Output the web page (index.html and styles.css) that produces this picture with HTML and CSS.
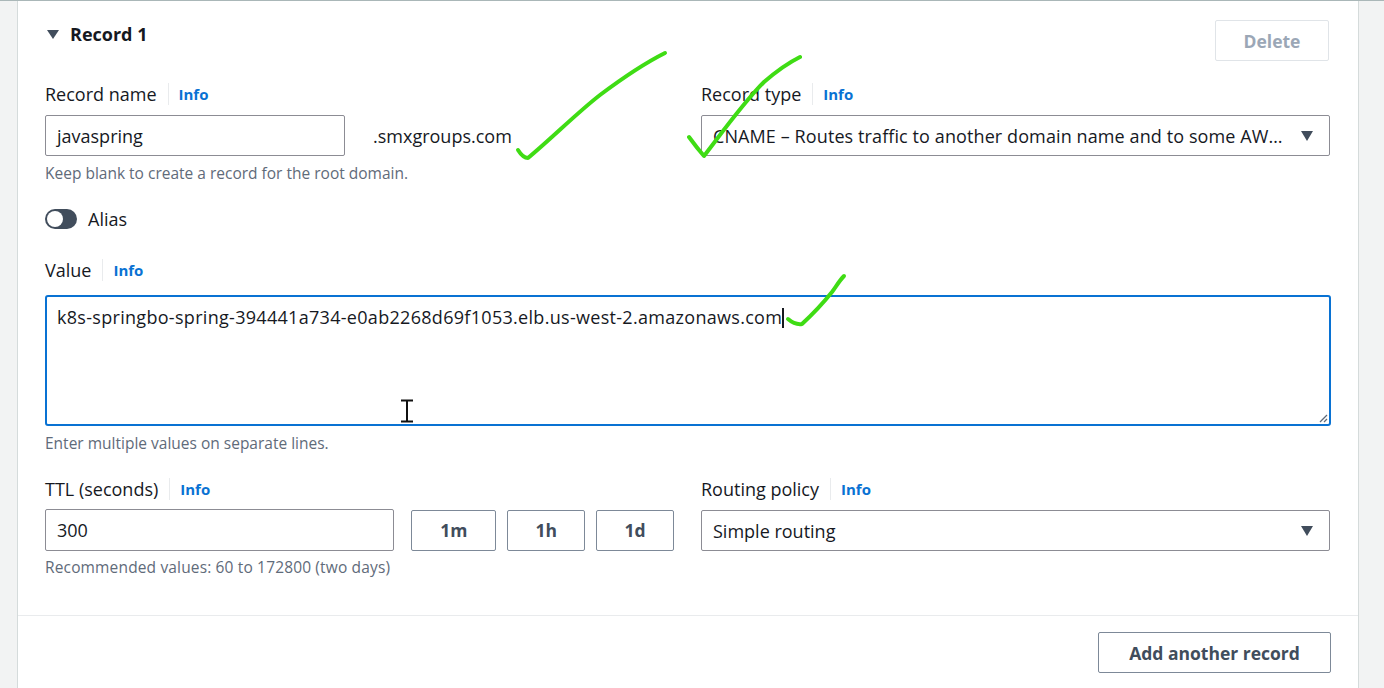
FILE: index.html
```html
<!DOCTYPE html>
<html lang="en">
<head>
<meta charset="utf-8">
<title>Record 1</title>
<link rel="stylesheet" href="styles.css">
</head>
<body>
<div class="page">
  <div class="strip-left"></div>
  <main class="panel">
    <div class="record">
      <div class="record-header">
        <div class="record-title"><span class="caret-down"></span>Record 1</div>
        <button class="btn btn-disabled">Delete</button>
      </div>

      <div class="grid-two">
        <div class="field">
          <div class="label-row"><span class="label">Record name</span><span class="sep"></span><a class="info">Info</a></div>
          <div class="name-row">
            <div class="input input-name">javaspring</div>
            <span class="suffix">.smxgroups.com</span>
          </div>
          <div class="hint">Keep blank to create a record for the root domain.</div>
        </div>
        <div class="field">
          <div class="label-row"><span class="label">Record type</span><span class="sep"></span><a class="info">Info</a></div>
          <div class="select">
            <span class="select-text cname">CNAME – Routes traffic to another domain name and to some AW…</span>
            <span class="tri"></span>
          </div>
        </div>
      </div>

      <div class="toggle-row">
        <span class="toggle"><span class="knob"></span></span>
        <span class="toggle-label">Alias</span>
      </div>

      <div class="field value-field">
        <div class="label-row"><span class="label">Value</span><span class="sep"></span><a class="info">Info</a></div>
        <div class="textarea">
          <span class="value-text">k8s-springbo-spring-394441a734-e0ab2268d69f1053.elb.us-west-2.amazonaws.com</span><span class="text-caret"></span>
          <svg class="resize" width="10" height="10" viewBox="0 0 10 10"><path d="M9 2 L2 9 M9 6 L6 9" stroke="#5f6b7a" stroke-width="1.3" fill="none"/></svg>
        </div>
        <div class="hint">Enter multiple values on separate lines.</div>
      </div>

      <div class="grid-two ttl-grid">
        <div class="field">
          <div class="label-row"><span class="label">TTL (seconds)</span><span class="sep"></span><a class="info">Info</a></div>
          <div class="ttl-row">
            <div class="input input-ttl">300</div>
            <button class="btn btn-small b1m">1m</button>
            <button class="btn btn-small b1h">1h</button>
            <button class="btn btn-small b1d">1d</button>
          </div>
          <div class="hint hint-ttl">Recommended values: 60 to 172800 (two days)</div>
        </div>
        <div class="field">
          <div class="label-row"><span class="label">Routing policy</span><span class="sep"></span><a class="info">Info</a></div>
          <div class="select">
            <span class="select-text">Simple routing</span>
            <span class="tri"></span>
          </div>
        </div>
      </div>
    </div>
    <div class="footer">
      <button class="btn btn-add">Add another record</button>
    </div>
  </main>
  <div class="strip-right"></div>
</div>

<svg class="marks" width="1384" height="688" viewBox="0 0 1384 688">
  <g fill="none" stroke="#3fdc14" stroke-width="4" stroke-linecap="round" stroke-linejoin="round">
    <path d="M518 150 Q523 158 528 158 C552 138 578 112 600 95 C624 77 645 63 665 53"/>
    <path d="M689 137 Q697 148 704 156 C724 130 744 102 764 82 C779 69 790 62 800 57"/>
    <path d="M788 319 Q795 325 802 324 C815 312 824 302 832 292 C837 285 840 280 844 276"/>
  </g>
</svg>
<svg class="ibeam" width="14" height="24" viewBox="0 0 14 24">
  <path d="M1 1.5 H13 M7 1.5 V22.5 M1 22.5 H13" stroke="#111" stroke-width="2" fill="none"/>
</svg>
</body>
</html>
```

FILE: styles.css
```css
* { box-sizing: border-box; }
html, body { margin: 0; padding: 0; }
body {
  width: 1384px;
  height: 688px;
  overflow: hidden;
  background: #f2f3f3;
  font-family: "Open Sans", "Noto Sans", sans-serif;
  color: #16191f;
  position: relative;
}
.page {
  display: flex;
  height: 688px;
  border-top: 1px solid #aab7b8;
}
.strip-left { width: 17px; flex: none; }
.strip-right { flex: 1; border-left: 1px solid #d5dbdb; }
.panel {
  width: 1341px;
  flex: none;
  background: #fff;
  border-left: 1px solid #d5dbdb;
  display: flex;
  flex-direction: column;
}
.record {
  padding: 19px 27px 0 27px;
  height: 615px;
  border-bottom: 1px solid #e9ebed;
}
.record-header {
  display: flex;
  justify-content: space-between;
  align-items: flex-start;
  height: 41px;
}
.record-title {
  display: flex;
  align-items: center;
  font-size: 18px;
  font-weight: 700;
  line-height: 28px;
}
.caret-down {
  width: 0; height: 0;
  margin: 0 11px 0 2px;
  border-left: 6.5px solid transparent;
  border-right: 6.5px solid transparent;
  border-top: 9px solid #414d5c;
}
.btn {
  font-family: "Open Sans", "Noto Sans", sans-serif;
  font-weight: 700;
  font-size: 17.5px;
  background: #fff;
  color: #414d5c;
  border: 1px solid #7d8998;
  border-radius: 2px;
  height: 41px;
  padding: 0;
}
.btn-disabled {
  width: 114px;
  margin-right: 2px;
  color: #9ba7b6;
  border-color: #e0e4e8;
}
.grid-two {
  display: grid;
  grid-template-columns: 629px 629px;
  column-gap: 27px;
  margin-top: 22px;
}
.label-row {
  display: flex;
  align-items: center;
  height: 22px;
}
.label {
  font-size: 18px;
  line-height: 22px;
}
.sep {
  width: 1px;
  height: 22px;
  background: #e9ebed;
  margin: 0 10px 0 11px;
}
.info {
  font-size: 15px;
  font-weight: 700;
  color: #0972d3;
  line-height: 22px;
}
.name-row {
  display: flex;
  align-items: center;
  margin-top: 10px;
}
.input {
  height: 41px;
  border: 1px solid #8c8c94;
  border-radius: 2px;
  font-size: 18px;
  display: flex;
  align-items: center;
  padding-left: 11px;
}
.input-name { width: 300px; }
.suffix {
  margin-left: 28px;
  font-size: 18px;
}
.hint {
  font-size: 15.5px;
  color: #5f6b7a;
  line-height: 18px;
  margin-top: 8px;
}
.hint-ttl { margin-top: 7px; letter-spacing: 0.15px; }
.select {
  height: 41px;
  margin-top: 10px;
  border: 1px solid #8c8c94;
  border-radius: 2px;
  display: flex;
  align-items: center;
  justify-content: space-between;
  padding: 0 16px 0 11px;
}
.select-text {
  font-size: 18px;
  white-space: nowrap;
}
.cname { letter-spacing: 0.1px; }
.tri {
  width: 0; height: 0;
  border-left: 6.5px solid transparent;
  border-right: 6.5px solid transparent;
  border-top: 10px solid #414d5c;
}
.toggle-row {
  display: flex;
  align-items: center;
  margin-top: 26px;
  height: 22px;
}
.toggle {
  width: 32px;
  height: 20px;
  border-radius: 10px;
  background: #414d5c;
  display: flex;
  align-items: center;
  padding-left: 2px;
}
.knob {
  width: 16px; height: 16px;
  border-radius: 50%;
  background: #fff;
}
.toggle-label {
  margin-left: 11px;
  font-size: 18px;
}
.value-field { margin-top: 29px; }
.textarea {
  position: relative;
  margin-top: 14px;
  height: 131px;
  border: 2px solid #0972d3;
  border-radius: 3px;
  padding: 8px 10px;
  font-size: 18px;
  line-height: 24px;
}
.value-text { letter-spacing: 0.3px; }
.text-caret {
  display: inline-block;
  width: 1.5px;
  height: 20px;
  background: #16191f;
  vertical-align: -4px;
}
.resize {
  position: absolute;
  right: 1px;
  bottom: 1px;
}
.ttl-grid { margin-top: 26px; }
.ttl-row {
  display: flex;
  align-items: center;
  margin-top: 9px;
}
.input-ttl { width: 350px; height: 42px; }
.btn-small { height: 41px; margin-left: 11px; }
.b1m { width: 85px; margin-left: 17px; }
.b1h { width: 78px; }
.b1d { width: 78px; }
.footer {
  display: flex;
  justify-content: flex-end;
  padding: 16px 27px 0 0;
}
.btn-add { width: 233px; }
.marks {
  position: absolute;
  left: 0;
  top: 0;
  pointer-events: none;
}
.ibeam {
  position: absolute;
  left: 400px;
  top: 399px;
}
```
